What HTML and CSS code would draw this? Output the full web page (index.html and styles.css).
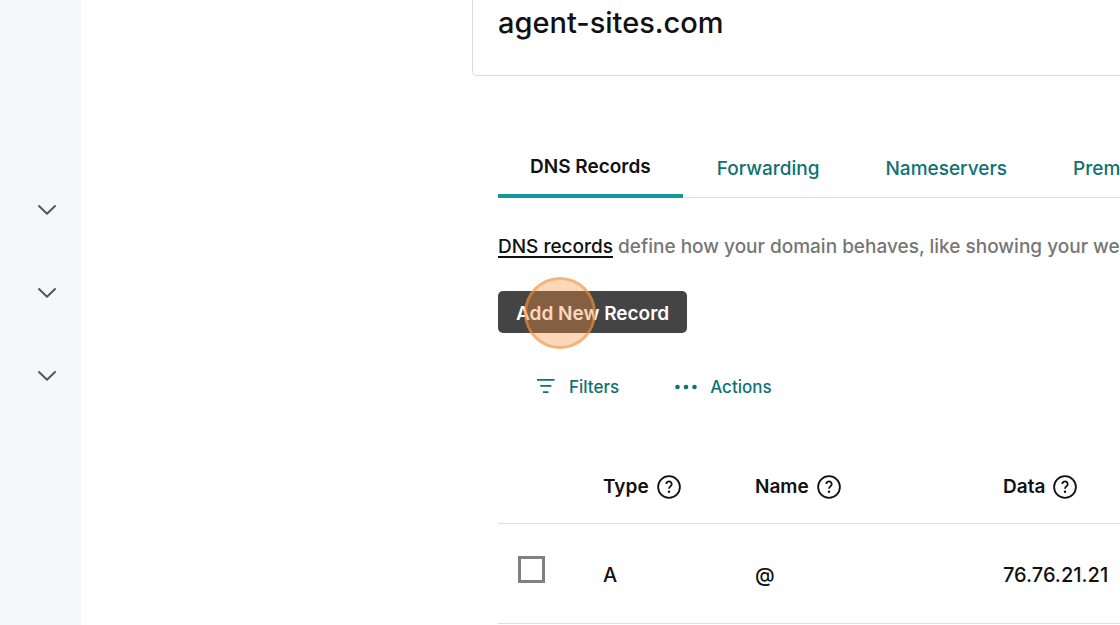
FILE: index.html
```html
<!DOCTYPE html>
<html lang="en">
<head>
    <meta charset="UTF-8">
    <title>DNS Management</title>
    <meta name="viewport" content="width=device-width, initial-scale=1.0">
    <link rel="stylesheet" href="styles.css">
</head>
<body>

<div class="layout">
    <aside class="sidebar">
        <button type="button" class="sidebar-toggle" aria-label="Expand section">
            <svg width="20" height="12" viewBox="0 0 20 12"><path d="M2 2l8 7.800L18 2"/></svg>
        </button>
        <button type="button" class="sidebar-toggle" aria-label="Expand section">
            <svg width="20" height="12" viewBox="0 0 20 12"><path d="M2 2l8 7.800L18 2"/></svg>
        </button>
        <button type="button" class="sidebar-toggle" aria-label="Expand section">
            <svg width="20" height="12" viewBox="0 0 20 12"><path d="M2 2l8 7.800L18 2"/></svg>
        </button>
    </aside>

    <main class="main">
        <section class="domain-card">
            <h1>agent-sites.com</h1>
        </section>

        <div class="content">
            <nav class="tabs">
                <a href="#records" class="tab active">DNS Records</a>
                <a href="#forwarding" class="tab">Forwarding</a>
                <a href="#nameservers" class="tab">Nameservers</a>
                <a href="#premium" class="tab">Prem</a>
            </nav>

            <p class="intro"><a href="#about">DNS records</a> define how your domain behaves, like showing your we</p>

            <div class="add-row">
                <button type="button" class="add-btn">Add New Record</button>
                <span class="click-marker"></span>
            </div>

            <div class="toolbar">
                <button type="button" class="tool-btn">
                    <svg width="20" height="16" viewBox="0 0 20 16"><path class="line" d="M1 .900h17.500M4.200 6.900h11.200M7 13.100h5.500"/></svg>
                    Filters
                </button>
                <button type="button" class="tool-btn">
                    <svg width="22" height="16" viewBox="0 0 22 16"><circle cx="2.500" cy="8" r="2.300"/><circle cx="11" cy="8" r="2.300"/><circle cx="19.500" cy="8" r="2.300"/></svg>
                    Actions
                </button>
            </div>

            <table class="records">
                <thead>
                    <tr>
                        <th class="col-check"></th>
                        <th class="col-type"><span class="heading">Type <svg class="help" width="24" height="24" viewBox="0 0 24 24"><circle cx="12" cy="12" r="10.900"/><path d="M9.300 9.100a2.700 2.700 0 1 1 4.300 2.100c-1 .700-1.600 1.200-1.600 2.500"/><circle class="dot" cx="12" cy="16.800" r="1.200"/></svg></span></th>
                        <th class="col-name"><span class="heading">Name <svg class="help" width="24" height="24" viewBox="0 0 24 24"><circle cx="12" cy="12" r="10.900"/><path d="M9.300 9.100a2.700 2.700 0 1 1 4.300 2.100c-1 .700-1.600 1.200-1.600 2.500"/><circle class="dot" cx="12" cy="16.800" r="1.200"/></svg></span></th>
                        <th><span class="heading">Data <svg class="help" width="24" height="24" viewBox="0 0 24 24"><circle cx="12" cy="12" r="10.900"/><path d="M9.300 9.100a2.700 2.700 0 1 1 4.300 2.100c-1 .700-1.600 1.200-1.600 2.500"/><circle class="dot" cx="12" cy="16.800" r="1.200"/></svg></span></th>
                    </tr>
                </thead>
                <tbody>
                    <tr>
                        <td class="check-cell"><input type="checkbox" class="checkbox" aria-label="Select record"></td>
                        <td>A</td>
                        <td>@</td>
                        <td>76.76.21.21</td>
                    </tr>
                </tbody>
            </table>
        </div>
    </main>
</div>

</body>
</html>
```
FILE: styles.css
```css
* {
    margin: 0;
    padding: 0;
    box-sizing: border-box;
    font-family: "Inter", "Liberation Sans", sans-serif;
}

body {
    background: #fff;
    color: #111;
    font-size: 19px;
    line-height: 28px;
    overflow: hidden;
}

button {
    border: none;
    background: none;
    cursor: pointer;
}

.layout {
    display: flex;
    min-height: 100vh;
}

.sidebar {
    flex: 0 0 81px;
    padding-top: 168px;
    background: #f5f7f9;
}

.sidebar-toggle {
    display: flex;
    align-items: center;
    justify-content: flex-end;
    width: 100%;
    height: 83px;
    padding-right: 24px;
}

.sidebar-toggle svg {
    fill: none;
    stroke: #55585b;
    stroke-width: 2;
    stroke-linecap: round;
    stroke-linejoin: round;
}

.main {
    flex: 1;
    min-width: 0;
    padding-left: 391px;
}

.domain-card {
    height: 76px;
    padding: 5px 25px;
    border: 1px solid #d6dbde;
    border-top: none;
    border-right: none;
    border-bottom-left-radius: 5px;
}

.domain-card h1 {
    font-size: 29px;
    line-height: 36px;
    font-weight: 500;
}

.content {
    padding: 64px 0 0 26px;
}

.tabs {
    display: flex;
    gap: 2px;
    height: 58px;
    border-bottom: 1px solid #dcdfe1;
    white-space: nowrap;
}

.tab {
    display: flex;
    align-items: center;
    height: 58px;
    padding: 0 32px;
    color: #0f7272;
    font-weight: 500;
    text-decoration: none;
}

.tab.active {
    border-bottom: 4px solid #12999b;
    color: #111;
    font-weight: 600;
}

.intro {
    margin-top: 35px;
    color: #767676;
    font-weight: 500;
    white-space: nowrap;
}

.intro a {
    color: #111;
    text-underline-offset: 3px;
    text-decoration-thickness: 2px;
}

.add-row {
    position: relative;
    margin-top: 30px;
}

.add-btn {
    display: block;
    height: 42px;
    padding: 2px 18px 0;
    border-radius: 5px;
    background: #444;
    color: #fff;
    font-size: 19px;
    font-weight: 600;
}

/* click highlight drawn over the button */
.click-marker {
    position: absolute;
    top: -14px;
    left: 26px;
    width: 72px;
    height: 72px;
    border: 3px solid rgba(243, 146, 62, 0.7);
    border-radius: 50%;
    background: rgba(248, 145, 64, 0.36);
    background-clip: padding-box;
    pointer-events: none;
}

.toolbar {
    display: flex;
    gap: 56px;
    margin-top: 40px;
    padding-left: 38px;
}

.tool-btn {
    display: flex;
    align-items: center;
    gap: 13px;
    color: #0f7272;
    font-size: 17px;
    font-weight: 500;
    line-height: 28px;
}

.tool-btn svg {
    fill: #0f7272;
}

.tool-btn .line {
    fill: none;
    stroke: #0f7272;
    stroke-width: 1.8;
}

.records {
    width: 100%;
    margin-top: 50px;
    border-collapse: collapse;
    table-layout: fixed;
    text-align: left;
    white-space: nowrap;
}

.records th {
    height: 72px;
    border-bottom: 1px solid #dcdfe1;
    font-weight: 600;
}

.records td {
    height: 100px;
    padding-top: 4px;
    border-bottom: 1px solid #dcdfe1;
    font-size: 20px;
    font-weight: 500;
}

.col-check {
    width: 105px;
}

.col-type {
    width: 152px;
}

.col-name {
    width: 248px;
}

.heading {
    display: flex;
    align-items: center;
    gap: 8px;
}

.help {
    fill: none;
    stroke: #111;
    stroke-width: 1.8;
}

.help .dot {
    fill: #111;
    stroke: none;
}

.records .check-cell {
    padding: 0 0 8px 20px;
}

.checkbox {
    display: block;
    appearance: none;
    width: 27px;
    height: 27px;
    border: 3px solid #808080;
    background: #fff;
}
```
